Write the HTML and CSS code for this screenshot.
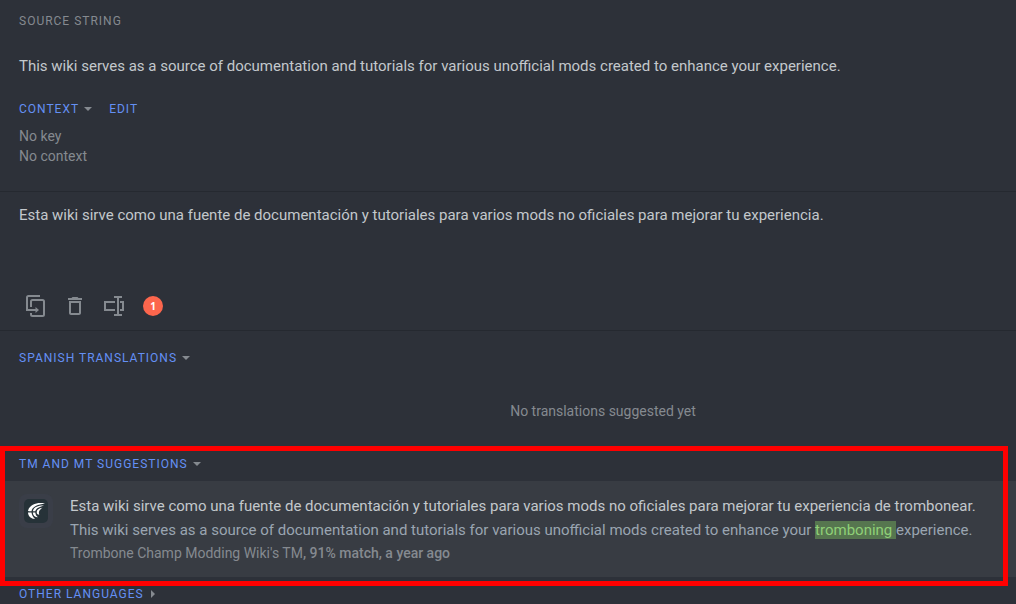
FILE: index.html
```
<!DOCTYPE html>
<html lang="en">
<head>
<meta charset="utf-8">
<title>Translation editor</title>
<link rel="stylesheet" href="styles.css">
</head>
<body>
<main class="editor">
  <section class="source">
    <h2 class="label label-muted">Source string</h2>
    <p class="source-text">This wiki serves as a source of documentation and tutorials for various unofficial mods created to enhance your experience.</p>
    <div class="context-bar">
      <button type="button" class="label label-link">Context <span class="caret-down"></span></button>
      <button type="button" class="label label-link">Edit</button>
    </div>
    <p class="context-line">No key</p>
    <p class="context-line">No context</p>
  </section>

  <section class="translation">
    <textarea class="translation-input" aria-label="Translation" spellcheck="false">Esta wiki sirve como una fuente de documentación y tutoriales para varios mods no oficiales para mejorar tu experiencia.</textarea>
    <div class="toolbar">
      <button type="button" class="tool" aria-label="Copy source">
        <svg viewBox="0 0 24 24" width="24" height="24" fill="none" stroke="currentColor" stroke-width="2">
          <path d="M16 2H4.500Q3 2 3 3.500V16H14"/>
          <path d="M7 13V7.500Q7 6 8.500 6H18.500Q20 6 20 7.500V20.500Q20 22 18.500 22H8.500Q7 22 7 20.500V19"/>
          <path d="M11.500 13L15 16L11.500 19Z" fill="currentColor" stroke="none"/>
        </svg>
      </button>
      <button type="button" class="tool" aria-label="Clear translation">
        <svg viewBox="0 0 24 24" width="24" height="24" fill="currentColor">
          <path d="M6 19c0 1.100.900 2 2 2h8c1.100 0 2-.900 2-2V7H6v12zM8 9h8v10H8V9zm7.500-5l-1-1h-5l-1 1H5v2h14V4z"/>
        </svg>
      </button>
      <button type="button" class="tool" aria-label="Select text">
        <svg viewBox="0 0 24 24" width="24" height="24" fill="none" stroke="currentColor" stroke-width="2">
          <path d="M13 8H3V16H13M18 8H21V16H18"/>
          <path d="M12 3H20M16 3V21M12 21H20"/>
        </svg>
      </button>
      <button type="button" class="tool" aria-label="1 issue"><span class="badge">1</span></button>
    </div>
  </section>

  <section class="translations">
    <button type="button" class="label label-link">Spanish translations <span class="caret-down"></span></button>
    <p class="empty">No translations suggested yet</p>
  </section>

  <section class="suggestions">
    <div class="suggestions-head">
      <button type="button" class="label label-link">TM and MT suggestions <span class="caret-down"></span></button>
    </div>
    <article class="suggestion">
      <span class="avatar">
        <svg viewBox="0 0 24 24" width="24" height="24" fill="#fff">
          <path d="M21 4.500C13 3 6 5.500 4 11.500Q4 12.200 5 12.200H7.500C8 8 13 5.500 21 4.500Z"/>
          <path d="M4 13.500H7.500C7.800 16 9 18 11 20C7 19.700 4.300 17.500 4 13.500Z"/>
          <path d="M20 6.500C13.500 6.300 9.500 8.500 8.800 12.200H11.300C12 9.500 15 7.800 20 6.500Z"/>
          <path d="M8.800 13.500H11.300C11.500 15.500 12.300 17 14 18.200C10.800 18.200 9 16.500 8.800 13.500Z"/>
          <path d="M18.500 8.800C15 9.300 12.800 10.700 12.700 13C12.700 14.800 13.500 15.700 15.300 15.800C14.300 13 15 11 18.500 8.800Z"/>
        </svg>
      </span>
      <div class="suggestion-body">
        <p class="suggestion-text">Esta wiki sirve como una fuente de documentación y tutoriales para varios mods no oficiales para mejorar tu experiencia de trombonear.</p>
        <p class="suggestion-source">This wiki serves as a source of documentation and tutorials for various unofficial mods created to enhance your <mark>tromboning </mark>experience.</p>
        <p class="suggestion-meta">Trombone Champ Modding Wiki's TM<b>, 91% match, a year ago</b></p>
      </div>
    </article>
    <div class="frame"></div>
  </section>

  <section class="others">
    <button type="button" class="label label-link">Other languages <span class="caret-right"></span></button>
  </section>
</main>
</body>
</html>
```
FILE: styles.css
```
* { box-sizing: border-box; }
body {
  margin: 0;
  background: #2d3139;
  color: #c3c8cc;
  font-family: Roboto, "Liberation Sans", sans-serif;
  font-size: 15px;
  line-height: 24px;
}
h2, p { margin: 0; }
button {
  padding: 0;
  border: 0;
  background: none;
  font-family: inherit;
  cursor: pointer;
}
.editor { overflow: hidden; }
.label {
  display: flex;
  align-items: center;
  gap: 5px;
  font-size: 12px;
  font-weight: 400;
  line-height: 20px;
  letter-spacing: 1px;
  text-transform: uppercase;
}
.label-muted { color: #858a90; }
.label-link { color: #6490f5; }
.caret-down {
  border: 4px solid transparent;
  border-top-color: #858a90;
  border-bottom: 0;
}
.caret-right {
  margin-left: 2px;
  border: 4px solid transparent;
  border-left-color: #858a90;
  border-right: 0;
}
.source {
  padding: 11px 19px 25px;
  border-bottom: 1px solid #252930;
}
.source-text { margin-top: 23px; }
.context-bar {
  display: flex;
  gap: 17px;
  margin: 21px 0 7px;
}
.context-line {
  color: #858a90;
  font-size: 14px;
  line-height: 20px;
}
.translation {
  padding: 11px 19px 12px;
  border-bottom: 1px solid #252930;
}
.translation-input {
  display: block;
  width: 100%;
  height: 72px;
  padding: 0;
  border: 0;
  outline: 0;
  resize: none;
  background: none;
  color: inherit;
  font: inherit;
}
.toolbar {
  display: flex;
  gap: 15px;
  margin: 19px 0 0 5px;
}
.tool {
  display: grid;
  place-items: center;
  width: 24px;
  height: 24px;
  color: #858a90;
}
.badge {
  width: 20px;
  border-radius: 50%;
  background: #fc664d;
  color: #fff;
  font-family: "Noto Sans", sans-serif;
  font-size: 10px;
  font-weight: 700;
  line-height: 20px;
}
.translations { padding: 17px 19px 23px; }
.empty {
  margin: 33px 0 0;
  padding-left: 190px;
  color: #858a90;
  font-size: 14px;
  line-height: 20px;
  text-align: center;
}
.suggestions { position: relative; }
.suggestions-head { padding: 10px 19px 7px; }
.suggestion {
  display: flex;
  gap: 17px;
  padding: 13px 19px;
  background: #383c43;
}
.avatar {
  display: grid;
  flex: none;
  place-items: center;
  width: 34px;
  height: 34px;
  border-radius: 8px;
  background: #3a3e48;
}
.avatar svg {
  border-radius: 5px;
  background: #263238;
}
.suggestion-source { color: #9aa5b1; }
.suggestion-source mark {
  background: #56764f;
  color: #8fd077;
}
.suggestion-meta {
  color: #858a90;
  font-size: 14px;
  line-height: 22px;
}
.suggestion-meta b { font-weight: 500; }
.frame {
  position: absolute;
  inset: 2px 8px -9px 0;
  border: 5px solid #f00;
  pointer-events: none;
}
.others { padding: 7px 19px 0; }
```
